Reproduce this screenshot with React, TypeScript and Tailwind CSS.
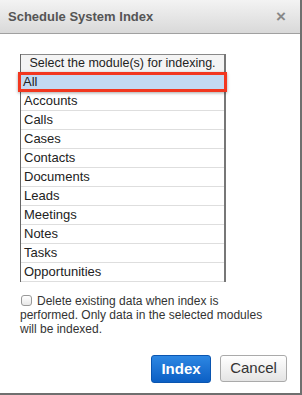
const modules = [
  'All',
  'Accounts',
  'Calls',
  'Cases',
  'Contacts',
  'Documents',
  'Leads',
  'Meetings',
  'Notes',
  'Tasks',
  'Opportunities',
];

export default function App() {
  return (
    <div
      className="w-[302px] h-[395px] bg-white border-r-2 border-b-2 border-[#6f6f6f] flex flex-col"
      style={{ fontFamily: '"Liberation Sans", Arial, sans-serif' }}
    >
      {/* Header */}
      <div className="h-[34px] shrink-0 bg-gradient-to-b from-[#f3f3f3] to-[#d9d9d9] border-b border-[#a0a0a0] flex items-center justify-between pl-[8px] pr-[14px]">
        <h1 className="text-[13px] font-bold text-[#555]">Schedule System Index</h1>
        <span className="text-[17px] font-bold text-[#888] leading-none">×</span>
      </div>

      <div className="flex-1 flex flex-col pt-[20px] pl-[20px]">
        {/* Module list */}
        <div className="w-[206px] border-l border-r-2 border-[#777] border-l-[#666]">
          <div className="h-[18px] border-t border-[#888] bg-[#f4f4f4] text-[12.5px] text-[#222] text-center leading-[17px]">
            Select the module(s) for indexing.
          </div>
          {modules.map((m, i) =>
            i === 0 ? (
              <div
                key={m}
                className="relative -mx-[3px] h-[20px] border-[3px] border-[#f2371f] bg-[#c3daf2] text-[13px] text-[#222] pl-[2px] leading-[14px] shadow-[0_1px_3px_rgba(0,0,0,0.35)]"
              >
                {m}
              </div>
            ) : (
              <div
                key={m}
                className="h-[19px] border-b border-[#dedede] text-[13px] text-[#222] pl-[3px] leading-[18px]"
              >
                {m}
              </div>
            ),
          )}
        </div>

        {/* Checkbox note */}
        <div className="mt-[12px] w-[280px] text-[12px] leading-[14px] text-[#333] whitespace-nowrap">
          <span className="inline-block align-[-1px] w-[11px] h-[11px] mr-[5px] ml-[1px] rounded-[3px] border border-[#999] bg-gradient-to-b from-white to-[#e8e8e8]" />
          Delete existing data when index is
          <br />
          performed. Only data in the selected modules
          <br />
          will be indexed.
        </div>

        {/* Buttons */}
        <div className="mt-auto mb-[10px] flex justify-end gap-[9px] pr-[13px]">
          <button className="w-[60px] h-[28px] rounded-[3px] bg-gradient-to-b from-[#2d87e3] to-[#0b5fc4] border border-[#0a55b0] text-white font-bold text-[15px]">
            Index
          </button>
          <button className="w-[67px] h-[27px] rounded-[3px] bg-gradient-to-b from-white to-[#e4e4e4] border border-[#aaa] text-[#333] text-[15px]">
            Cancel
          </button>
        </div>
      </div>
    </div>
  );
}
